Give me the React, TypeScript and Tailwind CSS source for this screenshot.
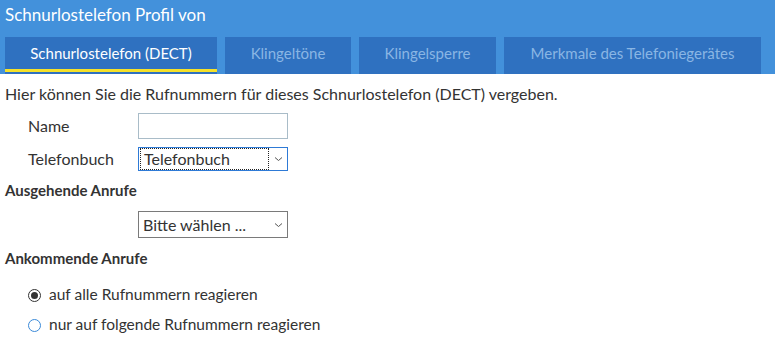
import { useState } from "react";

const tabs = [
  { label: "Schnurlostelefon (DECT)", width: "w-[212px]" },
  { label: "Klingeltöne", width: "w-[126px]" },
  { label: "Klingelsperre", width: "w-[137px]" },
  { label: "Merkmale des Telefoniegerätes", width: "w-[257px]" },
];

function Chevron() {
  return (
    <svg width="9" height="6" viewBox="0 0 9 6" className="text-[#555]" aria-hidden="true">
      <path d="M1 1.5 L4.5 4.5 L8 1.5" fill="none" stroke="currentColor" strokeWidth="1" />
    </svg>
  );
}

export default function App() {
  const [mode, setMode] = useState<"all" | "some">("all");

  return (
    <div className="w-[775px] h-[346px] bg-white font-['Lato','Noto_Sans',sans-serif] text-[#333]">
      <header className="h-[74px] bg-[#4391db] pl-[5px]">
        <h1 className="pt-[4px] h-[37px] text-[17px] leading-[22px] text-white">
          Schnurlostelefon Profil von
        </h1>
        <nav className="flex gap-[8px]">
          {tabs.map((t, i) => (
            <div
              key={t.label}
              className={`${t.width} h-[37px] flex flex-col bg-[#2f71c0] text-[15px]`}
            >
              <span
                className={`flex-1 flex items-center justify-center pt-[1px] ${
                  i === 0 ? "text-white" : "text-[#8ab6e4]"
                }`}
              >
                {t.label}
              </span>
              <span className={`h-[3px] mb-[2px] ${i === 0 ? "bg-[#f5e12a]" : ""}`} />
            </div>
          ))}
        </nav>
      </header>

      <main className="px-[5px] text-[16px]">
        <p className="mt-[10px] leading-[20px]">
          Hier können Sie die Rufnummern für dieses Schnurlostelefon (DECT) vergeben.
        </p>

        <div className="mt-[9px] flex items-center">
          <label className="w-[133px] pl-[23px]">Name</label>
          <input
            type="text"
            className="w-[150px] h-[26px] border border-[#a9bcc8] outline-none px-[4px]"
          />
        </div>

        <div className="mt-[8px] flex items-center">
          <label className="w-[133px] pl-[23px]">Telefonbuch</label>
          <div className="w-[150px] h-[24px] border border-[#2e7ad6] flex items-center">
            <span className="flex-1 h-full m-[1px] mr-0 border border-dotted border-[#222] flex items-center pl-[3px] leading-none">
              Telefonbuch
            </span>
            <span className="w-[18px] flex justify-center">
              <Chevron />
            </span>
          </div>
        </div>

        <h2 className="mt-[9px] text-[15px] font-bold leading-[20px]">Ausgehende Anrufe</h2>

        <div className="mt-[11px] flex items-center">
          <span className="w-[133px]" />
          <div className="w-[150px] h-[27px] border border-[#7a7a7a] flex items-center pl-[4px]">
            <span className="flex-1">Bitte wählen ...</span>
            <span className="w-[18px] flex justify-center">
              <Chevron />
            </span>
          </div>
        </div>

        <h2 className="mt-[10px] text-[15px] font-bold leading-[20px]">Ankommende Anrufe</h2>

        <div className="mt-[17px] flex flex-col gap-[10px] pl-[23px] text-[15.5px]">
          {[
            { key: "all" as const, label: "auf alle Rufnummern reagieren" },
            { key: "some" as const, label: "nur auf folgende Rufnummern reagieren" },
          ].map((r) => (
            <label key={r.key} className="flex items-center gap-[8px] h-[20px]">
              <span
                onClick={() => setMode(r.key)}
                className={`w-[13px] h-[13px] rounded-full border flex items-center justify-center ${
                  mode === r.key ? "border-[#333]" : "border-[#3b8ad8]"
                }`}
              >
                {mode === r.key && <span className="w-[7px] h-[7px] rounded-full bg-[#333]" />}
              </span>
              {r.label}
            </label>
          ))}
        </div>
      </main>
    </div>
  );
}
